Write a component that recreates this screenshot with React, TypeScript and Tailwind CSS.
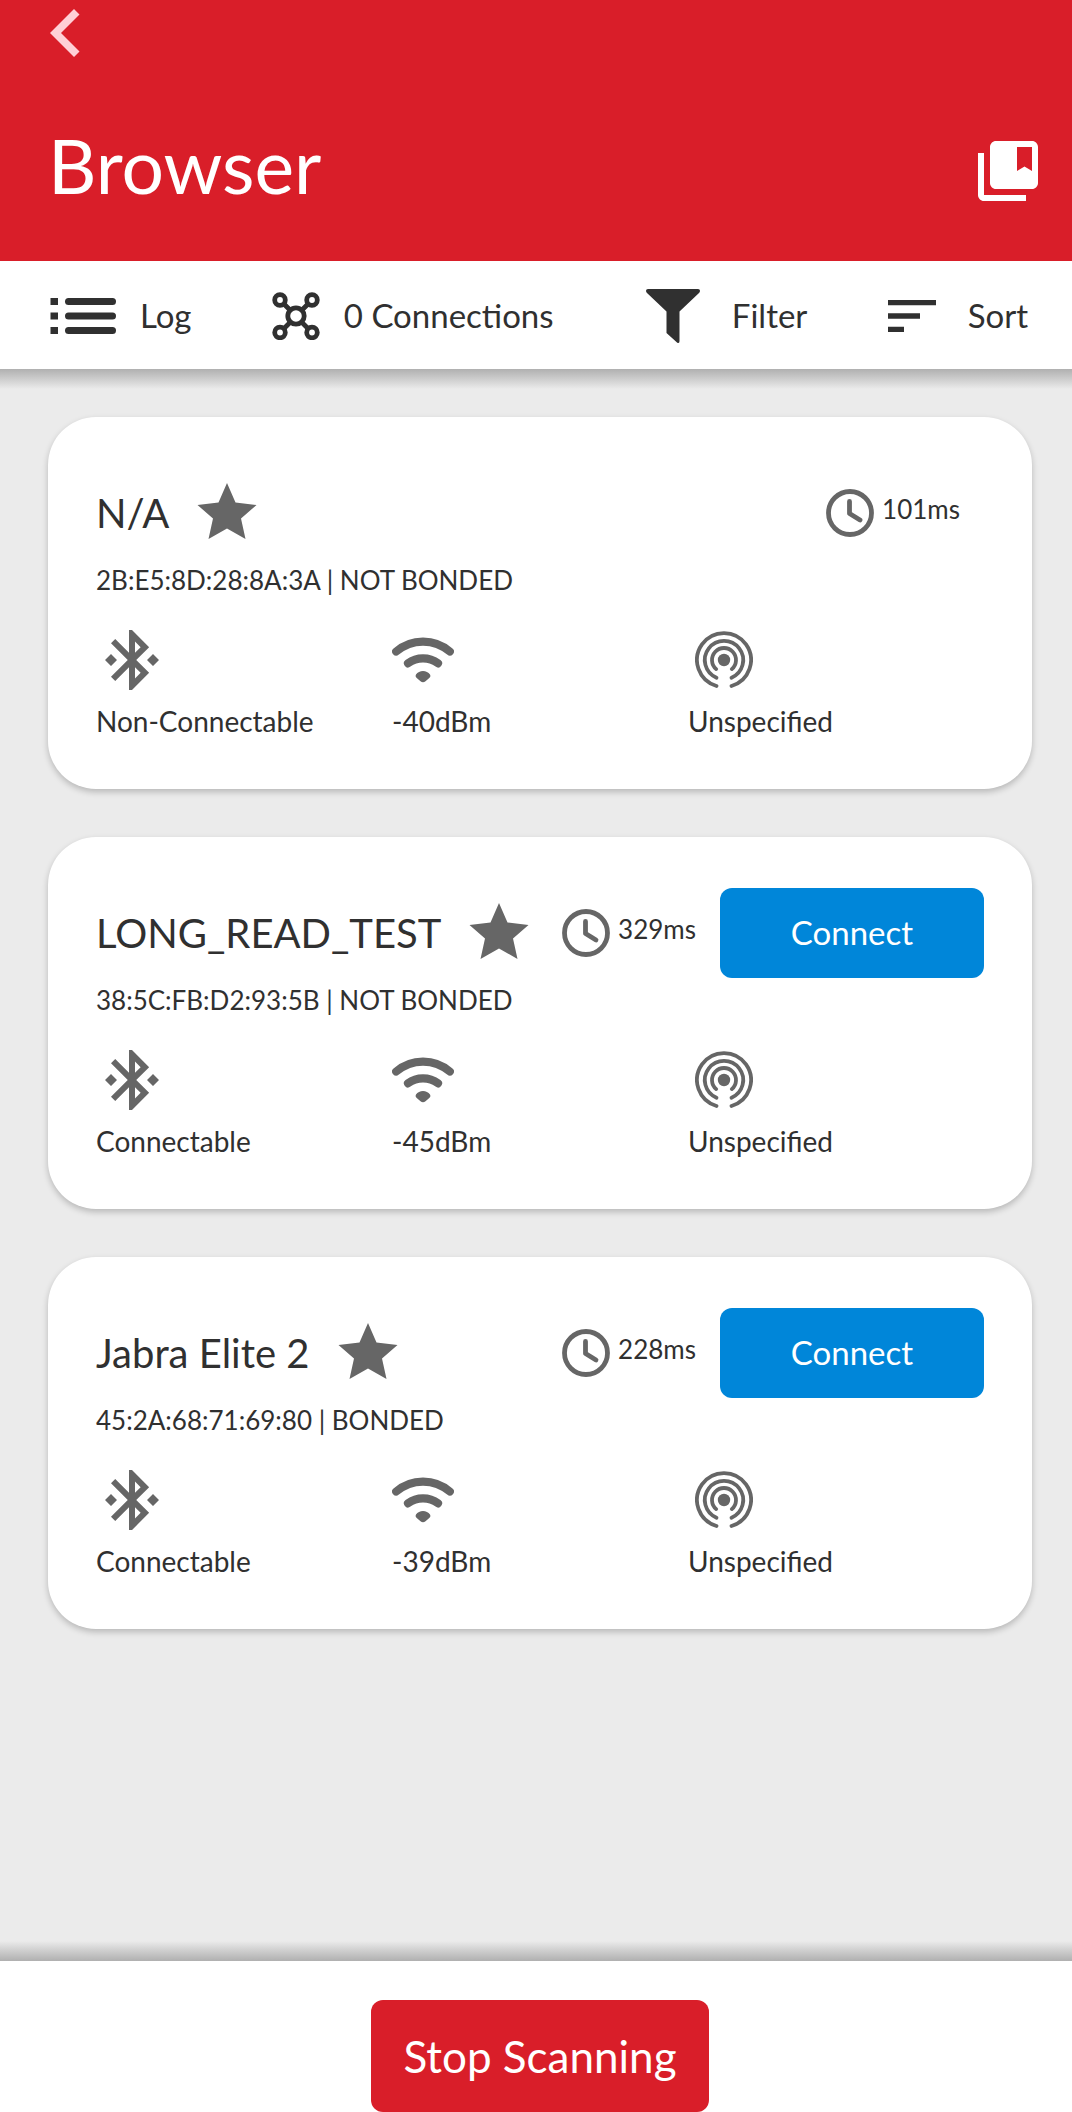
import React from "react";
import { MdBluetoothConnected, MdCollectionsBookmark, MdSort } from "react-icons/md";

type Device = {
  name: string;
  address: string;
  bond: string;
  interval: string;
  mode: string;
  connectable: boolean;
  rssi: string;
  beacon: string;
};

const devices: Device[] = [
  { name: "N/A", address: "2B:E5:8D:28:8A:3A", bond: "NOT BONDED", interval: "101ms", mode: "Non-Connectable", connectable: false, rssi: "-40dBm", beacon: "Unspecified" },
  { name: "LONG_READ_TEST", address: "38:5C:FB:D2:93:5B", bond: "NOT BONDED", interval: "329ms", mode: "Connectable", connectable: true, rssi: "-45dBm", beacon: "Unspecified" },
  { name: "Jabra Elite 2", address: "45:2A:68:71:69:80", bond: "BONDED", interval: "228ms", mode: "Connectable", connectable: true, rssi: "-39dBm", beacon: "Unspecified" },
];

function BackIcon() {
  return (
    <svg width="30" height="48" viewBox="0 0 30 48" fill="#ffd0d6" aria-hidden="true">
      <path d="M0 24 24 0l5.500 5.400L11 24l18.500 18.600L24 48z" />
    </svg>
  );
}

function ListIcon() {
  return (
    <svg width="66" height="36" viewBox="0 0 66 36" fill="currentColor" aria-hidden="true">
      {[0, 14.5, 29].map((y) => (
        <g key={y}>
          <rect x="0.500" y={y} width="7.500" height="7" />
          <rect x="15" y={y} width="51" height="7" rx="3.500" />
        </g>
      ))}
    </svg>
  );
}

function ConnectionsIcon() {
  return (
    <svg width="48" height="48" viewBox="0 0 48 48" fill="none" stroke="currentColor" strokeWidth="4.800" aria-hidden="true">
      <circle cx="24" cy="24" r="8.200" />
      <circle cx="8" cy="8" r="5.300" />
      <circle cx="40" cy="8" r="5.300" />
      <circle cx="8" cy="40.500" r="5.300" />
      <circle cx="40" cy="40.500" r="5.300" />
      <path d="m11.500 11.500 7 7M36.500 11.500l-7 7M11.500 37l7-7M36.500 37l-7-7" />
    </svg>
  );
}

function FilterIcon() {
  return (
    <svg width="54" height="54" viewBox="0 0 54 54" fill="currentColor" aria-hidden="true">
      <path d="M2 0h50q2 0 2 1.800 0 1.200-1 2.200L33.500 22.500V52q0 3-2.500 1.500L20.500 44V22.500L1 4Q0 3 0 1.800 0 0 2 0z" />
    </svg>
  );
}

function StarIcon() {
  return (
    <svg width="60" height="56" viewBox="0 0 60 56" fill="currentColor" aria-hidden="true">
      <path d="m30 0 8.500 19.500L59.500 22 44 35.500 48.500 56 30 45.500 11.500 56 16 35.500.5 22l21-2.500z" />
    </svg>
  );
}

function ClockIcon() {
  return (
    <svg width="48" height="48" viewBox="0 0 48 48" fill="none" stroke="currentColor" strokeWidth="4.800" strokeLinecap="round" strokeLinejoin="round" aria-hidden="true">
      <circle cx="24" cy="24" r="21.500" />
      <path d="M23.500 12.500v12l10.500 6.500" />
    </svg>
  );
}

function SignalIcon() {
  return (
    <svg width="62" height="48" viewBox="0 0 62 48" fill="none" stroke="currentColor" strokeWidth="8.200" strokeLinecap="round" aria-hidden="true">
      <path d="M4.200 15.500a41 41 0 0 1 53.600 0M16 27.300a25 25 0 0 1 30 0" />
      <path d="M24 38.500c3-4.700 11-4.700 14 0 1 1.800 0 2.700-1 3.700l-3.500 3q-2.500 2-5 0l-3.500-3c-1-1-2-1.900-1-3.700z" fill="currentColor" stroke="none" />
    </svg>
  );
}

function BeaconIcon() {
  return (
    <svg width="58" height="58" viewBox="-29 -29 58 58" fill="none" stroke="currentColor" strokeWidth="3.800" strokeLinecap="round" aria-hidden="true">
      <path d="M-7.500 26A27 27 0 1 1 7.500 26" />
      <path d="M-7.500 17.700A19.200 19.200 0 1 1 7.500 17.700" />
      <path d="M-7.800 9.100A12 12 0 1 1 7.800 9.100" />
      <circle r="6.200" fill="currentColor" stroke="none" />
    </svg>
  );
}

function Attribute({ icon, label }: { icon: React.ReactNode; label: string }) {
  return (
    <div className="flex flex-col items-start gap-1">
      <div className="flex h-[72px] items-center text-[#666]">{icon}</div>
      <span className="whitespace-nowrap text-[28px] leading-[42px]">{label}</span>
    </div>
  );
}

function DeviceCard({ device }: { device: Device }) {
  return (
    <li className="rounded-[48px] bg-white px-12 pt-[51px] pb-[47px] shadow-[0_3px_6px_rgba(0,0,0,0.22)]">
      <div className="flex h-[90px] items-center">
        <h2 className="whitespace-nowrap text-[40px] leading-[56px]">{device.name}</h2>
        <button type="button" aria-label={`Favorite ${device.name}`} className="ml-7 shrink-0 pb-1 text-[#666]">
          <StarIcon />
        </button>
        <div className="ml-auto flex items-center gap-2 pr-6">
          <span className="text-[#666]"><ClockIcon /></span>
          <span className="pb-2 text-[26px] leading-[40px]">{device.interval}</span>
        </div>
        {device.connectable && (
          <button type="button" className="h-[90px] w-[264px] shrink-0 rounded-[12px] bg-[#0086d9] text-[33px] text-white">
            Connect
          </button>
        )}
      </div>
      <p className="pt-[2px] text-[26px] leading-[40px]">{device.address} | {device.bond}</p>
      <div className="grid grid-cols-3 pt-6">
        <Attribute icon={<MdBluetoothConnected size={72} />} label={device.mode} />
        <Attribute icon={<SignalIcon />} label={device.rssi} />
        <Attribute icon={<span className="pl-[7px]"><BeaconIcon /></span>} label={device.beacon} />
      </div>
    </li>
  );
}

export default function App() {
  return (
    <div className="flex min-h-screen flex-col bg-[#ebebeb] font-['Lato',sans-serif] text-[#303030]">
      <header className="bg-[#d91e29] pr-7 pl-[50px] pt-[9px] pb-[36px] text-white">
        <button type="button" aria-label="Back" className="block"><BackIcon /></button>
        <div className="flex items-end justify-between pt-[54px]">
          <h1 className="-ml-0.5 pb-[6px] text-[75px] leading-[108px]">Browser</h1>
          <button type="button" aria-label="Bookmarked devices" className="pb-[18px]"><MdCollectionsBookmark size={72} /></button>
        </div>
      </header>
      <nav className="flex h-[108px] items-center justify-between bg-white pt-px pr-[44px] pl-[50px] text-[33px]">
        <button type="button" className="flex items-center gap-6"><ListIcon />Log</button>
        <button type="button" className="flex items-center gap-6"><ConnectionsIcon />0 Connections</button>
        <button type="button" className="flex items-center gap-8 pl-3"><FilterIcon />Filter</button>
        <button type="button" className="-ml-2 flex items-center gap-6"><MdSort size={64} />Sort</button>
      </nav>
      <div className="h-5 bg-linear-to-b from-[#b0b0b0] to-[#ebebeb]" />
      <main className="flex-1 pt-7 pr-10 pl-12">
        <ul className="flex flex-col gap-12">
          {devices.map((device) => (
            <DeviceCard key={device.address} device={device} />
          ))}
        </ul>
      </main>
      <div className="h-5 bg-linear-to-t from-[#b0b0b0] to-[#ebebeb]" />
      <footer className="flex justify-center bg-white pt-[39px] pl-2">
        <button type="button" className="h-[112px] rounded-[12px] bg-[#d91e29] px-8 text-[44px] text-white">Stop Scanning</button>
      </footer>
    </div>
  );
}
